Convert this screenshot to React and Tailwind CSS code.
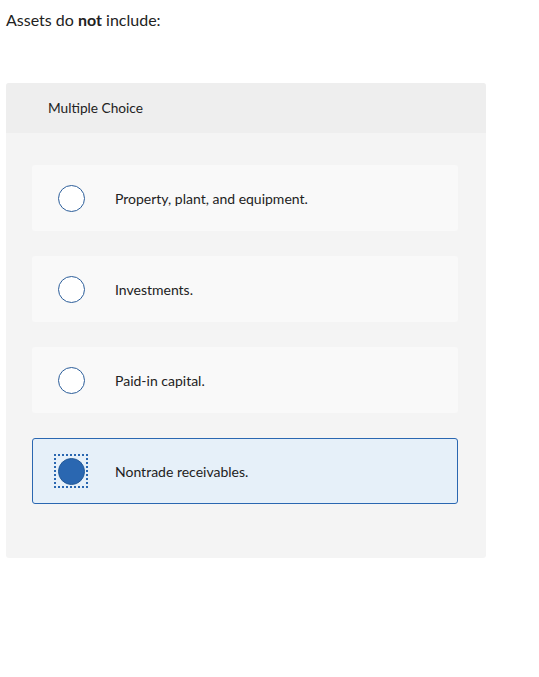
import React, { useState } from "react";

const options = [
  "Property, plant, and equipment.",
  "Investments.",
  "Paid-in capital.",
  "Nontrade receivables.",
];

const App = () => {
  const [selected, setSelected] = useState(3);

  return (
    <div className="min-h-screen bg-white text-[#222] font-['Lato','Open_Sans',sans-serif]">
      <div className="pt-[10px] px-[6px]">
        <p className="text-[16px] leading-[20px]">
          Assets do <b className="font-bold">not</b> include:
        </p>

        <div className="mt-[53px] w-[480px] bg-[#f4f4f4] rounded-[3px] pb-[54px]">
          <div className="h-[50px] bg-[#eeeeee] rounded-t-[3px] flex items-center pl-[42px] text-[13.7px]">
            Multiple Choice
          </div>

          <div className="flex flex-col gap-[25px] pt-[32px] pl-[26px]">
            {options.map((opt, i) => {
              const on = selected === i;
              return (
                <button
                  key={opt}
                  onClick={() => setSelected(i)}
                  className={
                    on
                      ? "w-[426px] h-[66px] flex items-center text-left rounded-[3px] border border-[#2a67b1] bg-[#e6f0f9] pl-[21px]"
                      : "w-[426px] h-[66px] flex items-center text-left rounded-[3px] border border-transparent bg-[#f9f9f9] pl-[21px]"
                  }
                >
                  <span
                    className={
                      on
                        ? "w-[34px] h-[34px] flex items-center justify-center border-2 border-dotted border-[#2a67b1]"
                        : "w-[34px] h-[34px] flex items-center justify-center"
                    }
                  >
                    <span
                      className={
                        on
                          ? "w-[27px] h-[27px] rounded-full border-[1.5px] border-[#245a98] bg-[#2a67b1]"
                          : "w-[27px] h-[27px] rounded-full border-[1.5px] border-[#2c5e9a] bg-white"
                      }
                    />
                  </span>
                  <span className="ml-[27px] text-[14px]">{opt}</span>
                </button>
              );
            })}
          </div>
        </div>
      </div>
    </div>
  );
};

export default App;
